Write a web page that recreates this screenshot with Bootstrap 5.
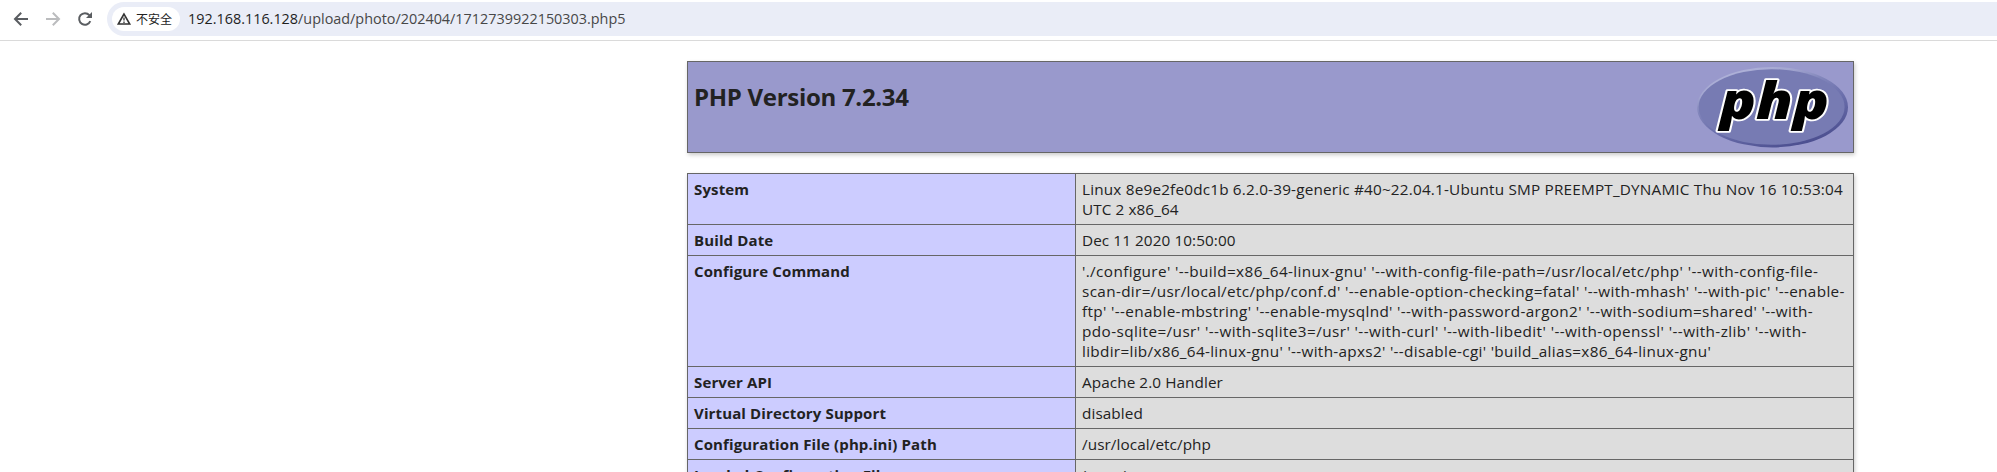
<!DOCTYPE html>
<html lang="zh-CN">
<head>
<meta charset="utf-8">
<title>phpinfo()</title>
<link rel="stylesheet" href="https://cdn.jsdelivr.net/npm/bootstrap@5.3.0/dist/css/bootstrap.min.css">
<style>
body{background:#fff;color:#222;font-family:"Open Sans","Noto Sans CJK SC",sans-serif;overflow:hidden;height:472px}
.toolbar{height:41px;border-bottom:1px solid #dadada;padding:2px 0 4px 12px}
.tool-icon{width:18px;height:18px;margin-right:14px;flex:none}
.omnibox{background:#eaedf7;height:34px;border-radius:17px 0 0 17px;margin-left:-1px;padding-left:5px}
.chip{background:#fff;height:24px;border-radius:12px;width:68px;padding-left:4px;font:12px/24px "Noto Sans CJK SC",sans-serif;color:#222}
.chip svg{margin-right:4px}
.url{font-size:14.4px;line-height:34px;color:#474747;padding-left:8px}
.url b{font-weight:400;color:#1f1f1f}
.info{width:1167px;margin:20px 0 0 687px}
.version{height:92px;background:#99c;border:1px solid #666;box-shadow:1px 2px 4px #ccc;margin-bottom:20px;padding:5px 5px 0 6px}
.version h1{font-size:24px;font-weight:700;line-height:30px;letter-spacing:-.3px;margin:15px 0 0}
.props{border:1px solid #666;border-bottom:0;box-shadow:1px 2px 4px #ccc;font-size:15.3px;line-height:20px}
.prop{border-bottom:1px solid #666}
.key{width:388px;flex:none;background:#ccf;border-right:1px solid #666;padding:5px 5px 5px 6px;font-weight:700;font-size:15px;letter-spacing:.13px}
.val{background:#ddd;padding:5px 4px 5px 6px;white-space:nowrap;letter-spacing:.08px}
.val span{display:block}
.s19{letter-spacing:.19px}.s31{letter-spacing:.31px}.s35{letter-spacing:.346px}.s37{letter-spacing:.374px}.s42{letter-spacing:.417px}
</style>
<script src="https://cdn.jsdelivr.net/npm/bootstrap@5.3.0/dist/js/bootstrap.bundle.min.js"></script>
</head>
<body>
<header class="toolbar d-flex align-items-center">
  <svg class="tool-icon" viewBox="0 0 18 18" fill="none" stroke="#5a5d61" stroke-width="2"><path d="M16 9H3.5M9.2 2.8 3 9l6.2 6.2"/></svg>
  <svg class="tool-icon" viewBox="0 0 18 18" fill="none" stroke="#bbbcbe" stroke-width="2"><path d="M2 9h12.5M8.8 2.8 15 9l-6.2 6.2"/></svg>
  <svg class="tool-icon" viewBox="0 0 18 18" fill="none" stroke="#5a5d61" stroke-width="2"><path d="M14.3 11.2A5.8 5.8 0 1 1 13.3 5.1L15 6.8"/><path d="M16 2v6h-6z" fill="#5a5d61" stroke="none"/></svg>
  <div class="omnibox d-flex align-items-center flex-grow-1">
    <div class="chip d-flex align-items-center">
      <svg width="16" height="16" viewBox="0 0 16 16" fill="none" stroke="#333" stroke-width="1.6"><path d="M8 3 2.3 13h11.4z"/><path d="M8 6.6v3M8 10.5v1.4" stroke-width="1.3"/></svg>
      <span>不安全</span>
    </div>
    <div class="url"><b>192.168.116.128</b>/upload/photo/202404/1712739922150303.php5</div>
  </div>
</header>
<main class="info">
  <div class="version d-flex justify-content-between align-items-start">
    <h1>PHP Version 7.2.34</h1>
    <svg width="151" height="81" viewBox="0 0 151 81">
      <defs>
        <linearGradient id="rim" x1=".2" y1="0" x2=".75" y2="1"><stop offset="0" stop-color="#b4b7dc"/><stop offset=".2" stop-color="#a3a6d0"/><stop offset=".36" stop-color="#8286bb"/><stop offset=".6" stop-color="#6a6eab"/><stop offset="1" stop-color="#484b8c"/></linearGradient>
      </defs>
      <ellipse cx="75.5" cy="40.2" rx="75.5" ry="40.2" fill="url(#rim)"/>
      <ellipse cx="74.6" cy="40" rx="73" ry="37.8" fill="#777bb3"/>
      <text x="23" y="52" textLength="109" lengthAdjust="spacingAndGlyphs" font-family="Open Sans" font-size="52" font-weight="800" font-style="italic" fill="#000" stroke="#fff" stroke-width="3.6" stroke-linejoin="round" paint-order="stroke">php</text>
    </svg>
  </div>
  <div class="props">
    <div class="prop d-flex"><div class="key">System</div><div class="val flex-grow-1"><span class="s19">Linux 8e9e2fe0dc1b 6.2.0-39-generic #40~22.04.1-Ubuntu SMP PREEMPT_DYNAMIC Thu Nov 16 10:53:04</span><span>UTC 2 x86_64</span></div></div>
    <div class="prop d-flex"><div class="key">Build Date</div><div class="val flex-grow-1">Dec 11 2020 10:50:00</div></div>
    <div class="prop d-flex"><div class="key">Configure Command</div><div class="val flex-grow-1"><span class="s37">'./configure' '--build=x86_64-linux-gnu' '--with-config-file-path=/usr/local/etc/php' '--with-config-file-</span><span class="s35">scan-dir=/usr/local/etc/php/conf.d' '--enable-option-checking=fatal' '--with-mhash' '--with-pic' '--enable-</span><span class="s35">ftp' '--enable-mbstring' '--enable-mysqlnd' '--with-password-argon2' '--with-sodium=shared' '--with-</span><span class="s42">pdo-sqlite=/usr' '--with-sqlite3=/usr' '--with-curl' '--with-libedit' '--with-openssl' '--with-zlib' '--with-</span><span class="s31">libdir=lib/x86_64-linux-gnu' '--with-apxs2' '--disable-cgi' 'build_alias=x86_64-linux-gnu'</span></div></div>
    <div class="prop d-flex"><div class="key">Server API</div><div class="val flex-grow-1">Apache 2.0 Handler</div></div>
    <div class="prop d-flex"><div class="key">Virtual Directory Support</div><div class="val flex-grow-1">disabled</div></div>
    <div class="prop d-flex"><div class="key">Configuration File (php.ini) Path</div><div class="val flex-grow-1">/usr/local/etc/php</div></div>
    <div class="prop d-flex"><div class="key">Loaded Configuration File</div><div class="val flex-grow-1">(none)</div></div>
  </div>
</main>
</body>
</html>
